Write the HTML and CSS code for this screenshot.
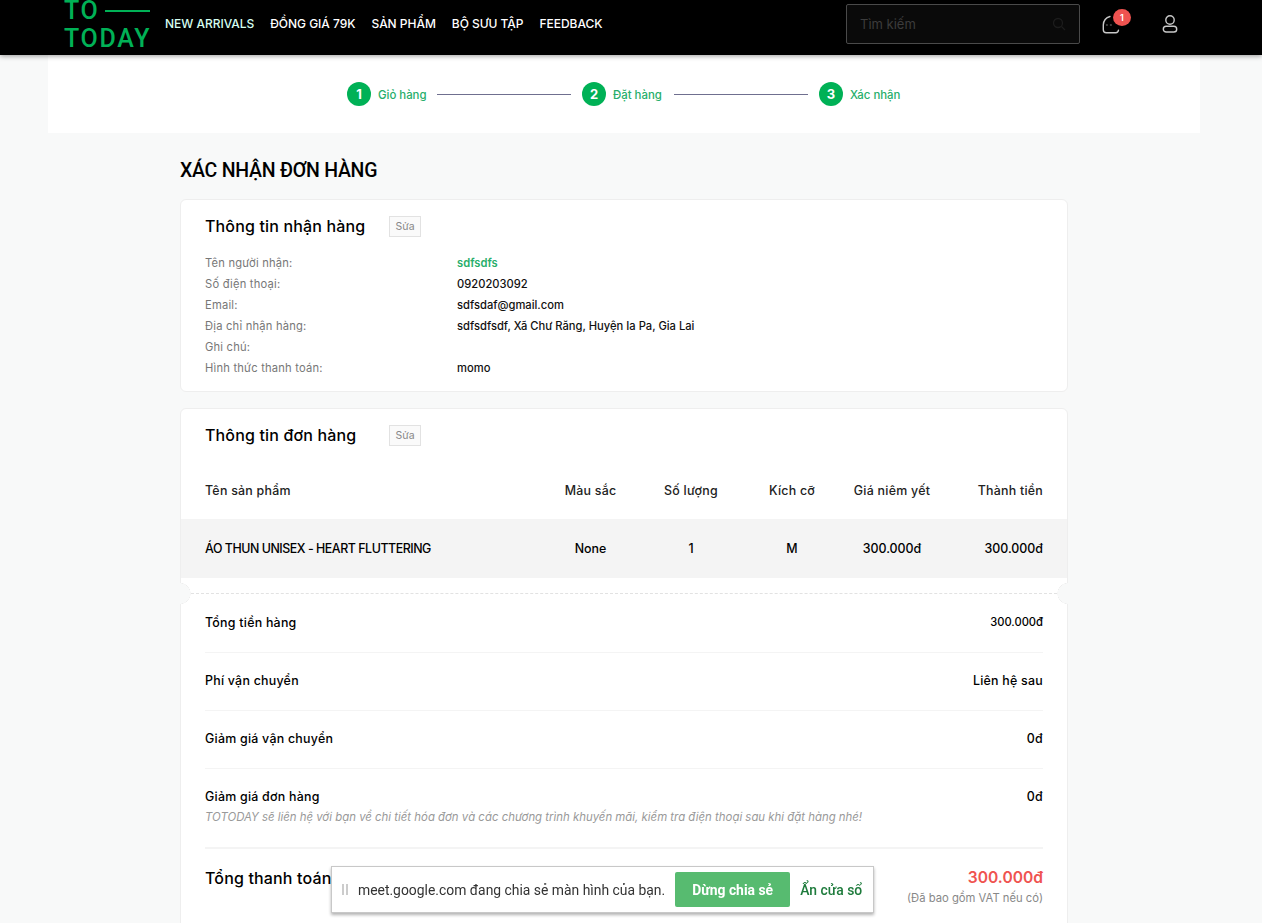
FILE: index.html
```html
<!DOCTYPE html>
<html lang="vi">

<head>
    <meta charset="UTF-8">
    <meta name="viewport" content="width=device-width, initial-scale=1.0">
    <title>Xác nhận đơn hàng</title>
    <link rel="stylesheet" href="styles.css">
</head>

<body>
    <header class="topbar">
        <a class="logo" href="#">
            <span class="logo-top">TO<i class="logo-dash"></i></span>
            <span class="logo-bottom">TODAY</span>
        </a>
        <nav class="menu">
            <a class="menu-new" href="#">NEW ARRIVALS</a>
            <a href="#">ĐỒNG GIÁ 79K</a>
            <a href="#">SẢN PHẨM</a>
            <a href="#">BỘ SƯU TẬP</a>
            <a href="#">FEEDBACK</a>
        </nav>
        <div class="search">
            <span>Tìm kiếm</span>
            <svg width="14" height="14" viewBox="0 0 14 14" fill="none" stroke="#1c1c1c" stroke-width="1.3">
                <circle cx="6" cy="6" r="4.5" />
                <path d="M9.5 9.5 13 13" />
            </svg>
        </div>
        <div class="cart">
            <svg width="20" height="20" viewBox="0 0 20 20" fill="none" stroke="#c8c8c8" stroke-width="1.4" stroke-linecap="round">
                <path d="M9 1.500C5 2.500 2.500 6 2.300 10v4.700c0 1.900 1.100 3 3 3h9.500c1.500 0 2.500-1 2.700-2.500" />
                <path d="M5.500 10h.8M9.500 10h.8" stroke="#555" />
            </svg>
            <span class="cart-badge">1</span>
        </div>
        <div class="user">
            <svg width="18" height="20" viewBox="0 0 18 20" fill="none" stroke="#c8c8c8" stroke-width="1.4">
                <circle cx="9" cy="6" r="4.200" />
                <rect x="2.300" y="12.300" width="13.400" height="5.700" rx="2.850" />
            </svg>
        </div>
    </header>

    <section class="steps">
        <div class="step"><span class="step-num">1</span><span class="step-label">Giỏ hàng</span></div>
        <i class="step-line"></i>
        <div class="step"><span class="step-num">2</span><span class="step-label">Đặt hàng</span></div>
        <i class="step-line"></i>
        <div class="step"><span class="step-num">3</span><span class="step-label">Xác nhận</span></div>
    </section>

    <main class="content">
        <h1 class="page-title">XÁC NHẬN ĐƠN HÀNG</h1>

        <section class="card card-info">
            <div class="card-head">
                <h2>Thông tin nhận hàng</h2>
                <button class="edit-btn">Sửa</button>
            </div>
            <dl class="info-list">
                <dt>Tên người nhận:</dt>
                <dd class="info-name">sdfsdfs</dd>
                <dt>Số điện thoại:</dt>
                <dd>0920203092</dd>
                <dt>Email:</dt>
                <dd>sdfsdaf@gmail.com</dd>
                <dt>Địa chỉ nhận hàng:</dt>
                <dd>sdfsdfsdf, Xã Chư Răng, Huyện Ia Pa, Gia Lai</dd>
                <dt>Ghi chú:</dt>
                <dd></dd>
                <dt>Hình thức thanh toán:</dt>
                <dd>momo</dd>
            </dl>
        </section>

        <section class="card card-order">
            <div class="card-head">
                <h2>Thông tin đơn hàng</h2>
                <button class="edit-btn">Sửa</button>
            </div>
            <div class="order-row order-labels">
                <span>Tên sản phẩm</span>
                <span>Màu sắc</span>
                <span>Số lượng</span>
                <span>Kích cỡ</span>
                <span>Giá niêm yết</span>
                <span>Thành tiền</span>
            </div>
            <div class="order-row order-item">
                <span class="order-name">ÁO THUN UNISEX - HEART FLUTTERING</span>
                <span>None</span>
                <span>1</span>
                <span>M</span>
                <span>300.000đ</span>
                <span>300.000đ</span>
            </div>
            <div class="ticket-cut"></div>
            <div class="summary">
                <div class="sum-row sum-first">
                    <span>Tổng tiền hàng</span>
                    <span class="sum-small">300.000đ</span>
                </div>
                <div class="sum-row">
                    <span>Phí vận chuyển</span>
                    <span>Liên hệ sau</span>
                </div>
                <div class="sum-row">
                    <span>Giảm giá vận chuyển</span>
                    <span>0đ</span>
                </div>
                <div class="sum-row sum-discount">
                    <div>
                        <span>Giảm giá đơn hàng</span>
                        <p class="sum-note">TOTODAY sẽ liên hệ với bạn về chi tiết hóa đơn và các chương trình khuyến mãi, kiểm tra điện thoại sau khi đặt hàng nhé!</p>
                    </div>
                    <span>0đ</span>
                </div>
                <div class="sum-total">
                    <span class="total-label">Tổng thanh toán</span>
                    <div class="total-right">
                        <div class="total-price">300.000đ</div>
                        <div class="total-vat">(Đã bao gồm VAT nếu có)</div>
                    </div>
                </div>
            </div>
        </section>
    </main>

    <div class="share-bar">
        <span class="share-grip"></span>
        <span class="share-text">meet.google.com đang chia sẻ màn hình của bạn.</span>
        <button class="share-stop">Dừng chia sẻ</button>
        <a class="share-hide" href="#">Ẩn cửa sổ</a>
    </div>
</body>

</html>
```

FILE: styles.css
```css
html,
body {
    height: 923px;
    overflow: hidden;
}

body {
    margin: 0;
    background-color: #f8f9f9;
    color: #000;
    font-family: "Inter", "Liberation Sans", sans-serif;
}

a {
    color: inherit;
    text-decoration: none;
}

/* top bar */
.topbar {
    display: flex;
    align-items: center;
    box-sizing: border-box;
    height: 55px;
    padding-left: 64px;
    padding-bottom: 8px;
    background-color: #000;
    box-shadow: 0 1px 5px rgba(0, 0, 0, 0.4);
    position: relative;
}

.logo {
    display: flex;
    flex-direction: column;
    gap: 8px;
    align-self: flex-start;
    width: 86px;
    margin-top: 1px;
    color: #00b156;
    font-family: "Roboto", sans-serif;
    font-weight: 500;
    font-size: 25px;
    line-height: 20px;
    letter-spacing: 1.7px;
}

.logo-top {
    display: flex;
    align-items: center;
}

.logo-dash {
    flex: 1;
    height: 2px;
    margin-left: 5px;
    background-color: #00b156;
}

.logo-bottom {
    white-space: nowrap;
}

.menu {
    display: flex;
    gap: 16px;
    margin-left: 15px;
    color: #fff;
    font-size: 12px;
    font-weight: 500;
    letter-spacing: -0.03px;
    white-space: nowrap;
}

.menu-new {
    color: #d6fff0;
}

.search {
    display: flex;
    align-items: center;
    justify-content: space-between;
    box-sizing: border-box;
    width: 234px;
    height: 40px;
    margin-left: auto;
    padding: 0 13px;
    border: 1px solid #4a4a4a;
    border-radius: 2px;
    background-color: #0a0a0a;
    color: #3c3c3c;
    font-size: 13px;
}

.cart {
    position: relative;
    width: 20px;
    height: 20px;
    margin-top: 3px;
    margin-left: 21px;
}

.cart-badge {
    position: absolute;
    top: -6px;
    left: 12px;
    width: 18px;
    height: 17px;
    border-radius: 50%;
    background-color: #ef5350;
    color: #fff;
    font-size: 9px;
    font-weight: 600;
    line-height: 17px;
    text-align: center;
}

.user {
    width: 18px;
    height: 20px;
    margin-left: 40px;
    margin-right: 83px;
}

/* steps */
.steps {
    display: grid;
    grid-template-columns: 79px 134px 81px 134px auto;
    column-gap: 11px;
    align-items: center;
    height: 78px;
    margin: 0 62px 0 48px;
    padding-left: 299px;
    background-color: #fff;
}

.step {
    display: flex;
    align-items: center;
    gap: 7px;
    color: #27ae6b;
    font-size: 11.400px;
    font-weight: 500;
    white-space: nowrap;
}

.step-label {
    padding-top: 1px;
}

.step-num {
    flex: none;
    width: 24px;
    height: 24px;
    border-radius: 50%;
    background-color: #00b156;
    color: #fff;
    font-size: 13px;
    font-weight: 700;
    line-height: 24px;
    text-align: center;
}

.step-line {
    height: 1px;
    background-color: #6f6f8f;
}

/* content */
.content {
    width: 888px;
    margin-left: 180px;
}

.page-title {
    margin: 26px 0 17px;
    font-family: "Roboto", sans-serif;
    font-size: 19.500px;
    font-weight: 500;
    letter-spacing: -0.25px;
    line-height: 23px;
}

.card {
    position: relative;
    box-sizing: border-box;
    margin-bottom: 16px;
    border: 1px solid #eeeeee;
    border-radius: 6px;
    background-color: #fff;
}

.card-info {
    height: 193px;
    padding: 16px 24px 0;
}

.card-head {
    display: flex;
    align-items: center;
}

.card-head h2 {
    width: 184px;
    margin: 0;
    font-size: 16px;
    font-weight: 500;
    letter-spacing: 0.15px;
    line-height: 21px;
}

.edit-btn {
    width: 32px;
    height: 21px;
    padding: 0;
    border: 1px solid #e2e2e2;
    background-color: #fafafa;
    color: #888;
    font-family: inherit;
    font-size: 10.500px;
}

.info-list {
    display: grid;
    grid-template-columns: 252px 1fr;
    grid-auto-rows: 21px;
    margin: 16px 0 0;
    font-size: 11.200px;
    line-height: 21px;
}

.info-list dt {
    color: #777;
    letter-spacing: 0.2px;
}

.info-list dd {
    margin: 0;
    color: #111;
    font-weight: 500;
}

.info-list .info-name {
    color: #27ae6b;
    font-weight: 600;
}

/* order card */
.card-order {
    height: 560px;
    padding-top: 16px;
}

.card-order .card-head {
    padding: 0 24px;
}

.order-row {
    display: grid;
    grid-template-columns: 340px 91px 110px 92px 108px 1fr;
    align-items: center;
    padding: 0 24px;
    font-size: 12.400px;
    font-weight: 500;
}

.order-row span {
    text-align: center;
}

.order-row span:first-child {
    text-align: left;
}

.order-row span:last-child {
    text-align: right;
}

.order-labels {
    height: 58px;
    margin-top: 15px;
    color: #222;
    letter-spacing: 0.25px;
}

.order-item {
    height: 59px;
    background-color: #f4f4f4;
}

.order-item .order-name {
    letter-spacing: -0.45px;
    white-space: nowrap;
}

/* dashed line with notches on the card edges */
.ticket-cut {
    position: relative;
    height: 34px;
    margin-bottom: -1px;
}

.ticket-cut::after {
    content: "";
    position: absolute;
    top: 15px;
    left: 10px;
    right: 10px;
    border-top: 1px dashed #e2e2e2;
}

.ticket-cut::before {
    content: "";
    position: absolute;
    top: 5px;
    left: -1px;
    right: -1px;
    height: 21px;
    background:
        radial-gradient(circle at 0 10.500px, #f8f9f9 10px, #eeeeee 10.300px, transparent 10.800px),
        radial-gradient(circle at 100% 10.500px, #f8f9f9 10px, #eeeeee 10.300px, transparent 10.800px);
}

.summary {
    padding: 0 24px;
}

.sum-row {
    display: flex;
    justify-content: space-between;
    height: 58px;
    box-sizing: border-box;
    padding-top: 19px;
    border-bottom: 1px solid #f4f4f4;
    font-size: 12.400px;
    font-weight: 500;
    letter-spacing: 0.25px;
    line-height: 18px;
}

.sum-first {
    padding-top: 3px;
    height: 42px;
}

.sum-small {
    font-size: 11.200px;
    letter-spacing: 0;
    line-height: 16px;
}

.sum-discount {
    height: 80px;
    border-bottom-width: 2px;
}

.sum-note {
    margin: 3px 0 0;
    color: #999;
    font-size: 11.400px;
    font-style: italic;
    font-weight: 400;
    letter-spacing: 0;
    line-height: 16px;
}

.sum-total {
    display: flex;
    justify-content: space-between;
    padding-top: 17px;
}

.total-label {
    font-size: 16px;
    font-weight: 500;
    letter-spacing: 0.15px;
    line-height: 24px;
}

.total-right {
    text-align: right;
}

.total-price {
    color: #ef5350;
    font-size: 15.600px;
    font-weight: 600;
    line-height: 24px;
}

.total-vat {
    margin-top: 1px;
    color: #888;
    font-size: 11.250px;
    line-height: 14px;
}

/* browser screen share bar */
.share-bar {
    position: fixed;
    left: 331px;
    top: 866px;
    display: flex;
    align-items: center;
    box-sizing: border-box;
    width: 543px;
    height: 47px;
    padding-left: 10px;
    border: 1px solid #c8c8c8;
    background-color: #fff;
    box-shadow: 0 2px 3px rgba(0, 0, 0, 0.3);
    font-family: "Roboto", sans-serif;
}

.share-grip {
    width: 2px;
    height: 11px;
    border-left: 2px solid #ccc;
    border-right: 2px solid #ccc;
}

.share-text {
    margin-left: 10px;
    color: #333;
    font-size: 13.900px;
    white-space: nowrap;
}

.share-stop {
    width: 115px;
    height: 35px;
    margin-left: 10px;
    border: none;
    border-radius: 2px;
    background-color: #57bb70;
    color: #fff;
    font-family: inherit;
    font-size: 13.900px;
    font-weight: 700;
}

.share-hide {
    margin-left: 10px;
    color: #1e7b3c;
    font-size: 13.900px;
    font-weight: 500;
    white-space: nowrap;
}
```
